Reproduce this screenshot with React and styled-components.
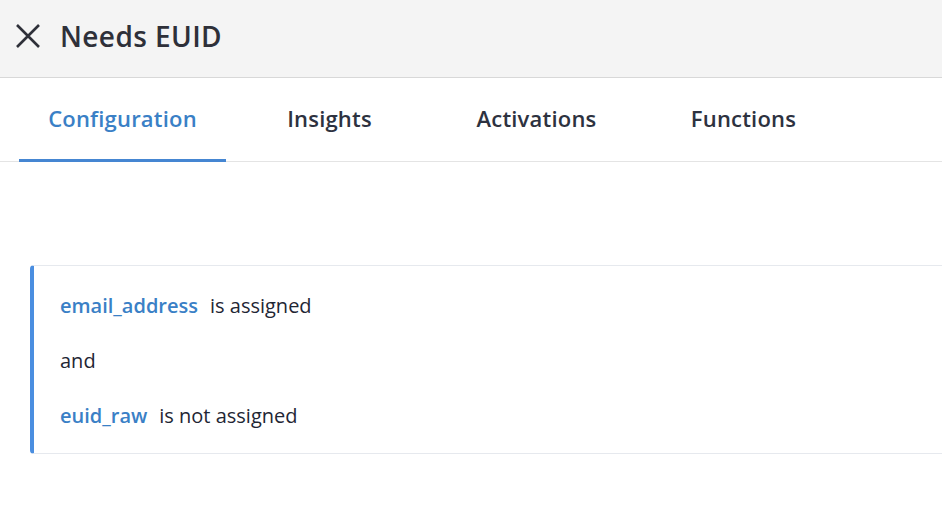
import React from "react";
import styled, { createGlobalStyle } from "styled-components";

const Global = createGlobalStyle`
  html, body { margin: 0; padding: 0; background: #fff; }
  body { font-family: "Open Sans", "Liberation Sans", sans-serif; overflow: hidden; }
`;

const Page = styled.div`
  width: 942px;
  height: 516px;
  display: flex;
  flex-direction: column;
  background: #fff;
`;

const Header = styled.header`
  height: 78px;
  background: #f4f4f4;
  border-bottom: 1px solid #d8d8d8;
  display: flex;
  align-items: center;
  gap: 19px;
  padding: 0 0 6px 15px;
  box-sizing: border-box;
  flex-shrink: 0;
`;

const CloseButton = styled.button`
  width: 26px;
  height: 26px;
  padding: 0;
  border: none;
  background: none;
  display: flex;
  align-items: center;
  justify-content: center;
  cursor: pointer;
`;

const Title = styled.h1`
  margin: 0;
  font-size: 28px;
  font-weight: 600;
  color: #2e3039;
  letter-spacing: 0.4px;
`;

const TabBar = styled.nav`
  height: 84px;
  display: flex;
  padding-left: 19px;
  border-bottom: 1px solid #e4e4e4;
  box-sizing: border-box;
  flex-shrink: 0;
`;

const Tab = styled.div`
  width: 207px;
  display: flex;
  align-items: center;
  justify-content: center;
  font-size: 22px;
  font-weight: 600;
  letter-spacing: 0.2px;
  color: ${(p) => (p.$active ? "#3a80c6" : "#2d3240")};
  border-bottom: 3px solid ${(p) => (p.$active ? "#4586d2" : "transparent")};
  margin-bottom: -1px;
  padding-bottom: 2px;
`;

const Content = styled.main`
  padding: 103px 0 0 30px;
`;

const Card = styled.section`
  height: 189px;
  box-sizing: border-box;
  border: 1px solid #e6e9ee;
  border-left: 4px solid #4a8ee0;
  border-right: none;
  border-radius: 4px 0 0 4px;
  padding: 27px 0 0 26px;
  display: flex;
  flex-direction: column;
  gap: 29px;
`;

const Line = styled.div`
  font-size: 20px;
  line-height: 26px;
  color: #1f2634;
`;

const Field = styled.span`
  color: #3a80c6;
  font-weight: 600;
  margin-right: 12px;
`;

const tabs = ["Configuration", "Insights", "Activations", "Functions"];

export default function App() {
  return (
    <Page>
      <Global />
      <Header>
        <CloseButton aria-label="Close">
          <svg width="26" height="26" viewBox="0 0 26 26">
            <path d="M2 2 L24 24 M24 2 L2 24" stroke="#2e3039" strokeWidth="2.6" strokeLinecap="butt" />
          </svg>
        </CloseButton>
        <Title>Needs EUID</Title>
      </Header>
      <TabBar>
        {tabs.map((t, i) => (
          <Tab key={t} $active={i === 0}>{t}</Tab>
        ))}
      </TabBar>
      <Content>
        <Card>
          <Line><Field>email_address</Field>is assigned</Line>
          <Line>and</Line>
          <Line><Field>euid_raw</Field>is not assigned</Line>
        </Card>
      </Content>
    </Page>
  );
}
